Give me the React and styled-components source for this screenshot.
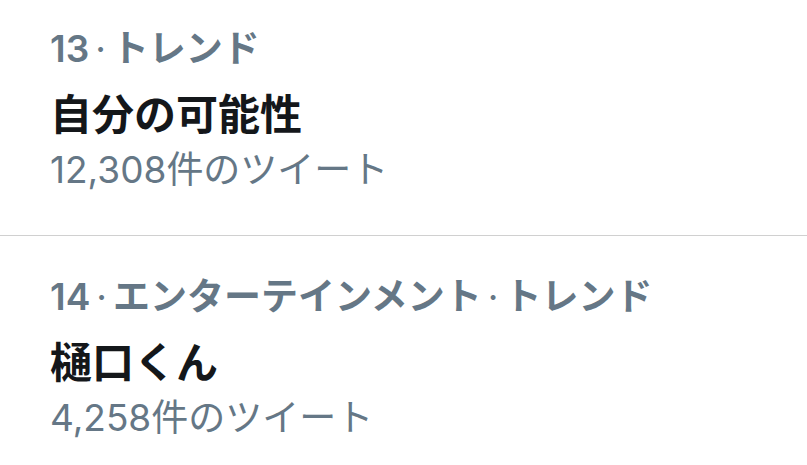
import React from 'react'
import styled, { createGlobalStyle } from 'styled-components'

const GlobalStyle = createGlobalStyle`
  html, body {
    margin: 0;
    padding: 0;
    background: #fff;
  }
  body {
    font-family: Inter, "Noto Sans CJK JP", sans-serif;
    -webkit-font-smoothing: antialiased;
  }
`

const TrendList = styled.ul`
  list-style: none;
  margin: 0;
  padding: 0;
  width: 807px;
`

const TrendItem = styled.li`
  padding: ${p => (p.$first ? 25 : 37)}px 50px 40px;
  border-bottom: 1px solid #d0d0d0;

  &:last-child {
    border-bottom: none;
  }
`

const Meta = styled.div`
  display: flex;
  align-items: center;
  font-size: 37px;
  line-height: 48px;
  font-weight: 600;
  color: #657786;
  white-space: nowrap;
`

const Dot = styled.span`
  margin: 0 6px;
  font-weight: 400;
`

const Title = styled.div`
  margin-top: 12px;
  font-size: 42px;
  line-height: 60px;
  font-weight: 700;
  color: #14171a;
`

const Count = styled.div`
  font-size: 37px;
  line-height: 50px;
  font-weight: 400;
  color: #657786;
`

const trends = [
  { rank: 13, tags: ['トレンド'], title: '自分の可能性', count: '12,308' },
  { rank: 14, tags: ['エンターテインメント', 'トレンド'], title: '樋口くん', count: '4,258' },
]

export default function App() {
  return (
    <>
      <GlobalStyle />
      <TrendList>
        {trends.map((t, i) => (
          <TrendItem key={t.rank} $first={i === 0}>
            <Meta>
              {t.rank}
              {t.tags.map(tag => (
                <React.Fragment key={tag}>
                  <Dot>·</Dot>
                  {tag}
                </React.Fragment>
              ))}
            </Meta>
            <Title>{t.title}</Title>
            <Count>{t.count}件のツイート</Count>
          </TrendItem>
        ))}
      </TrendList>
    </>
  )
}
